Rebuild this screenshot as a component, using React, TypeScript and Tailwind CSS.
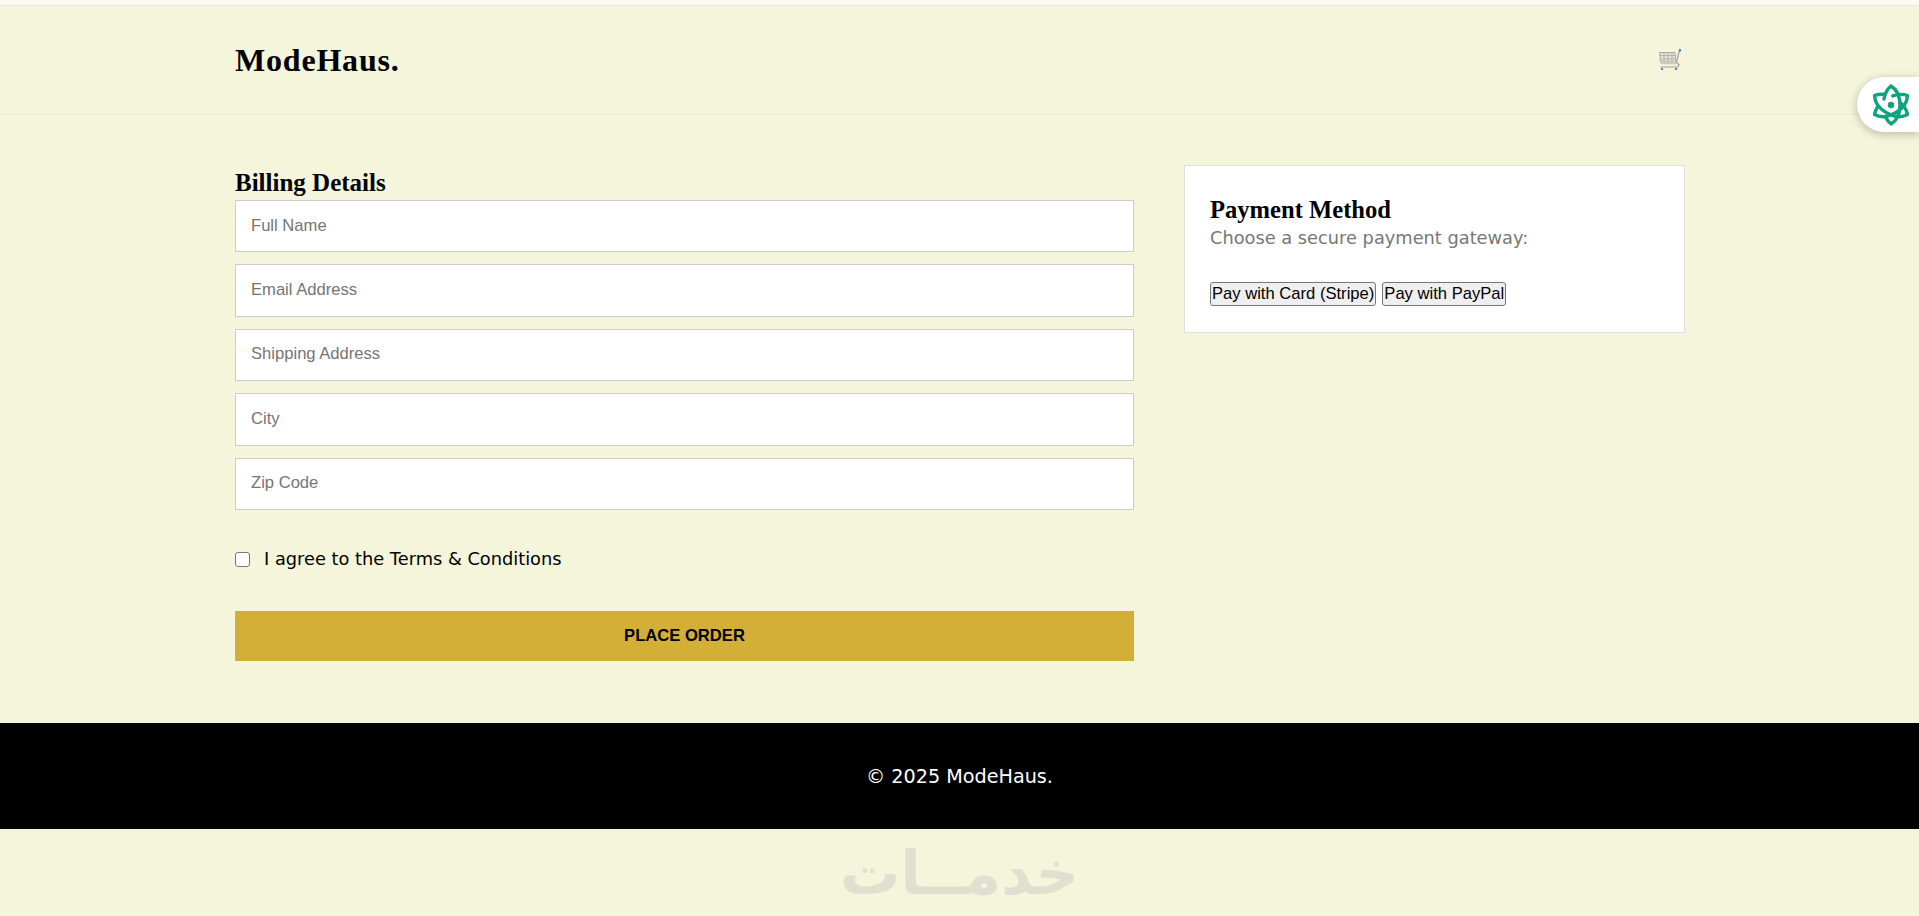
const fields = ["Full Name", "Email Address", "Shipping Address", "City", "Zip Code"];

const playfair = "font-['Liberation_Serif',serif] font-bold";
const montserrat = "font-['DejaVu_Sans',sans-serif]";
const arial = "font-['Liberation_Sans',sans-serif]";

function CartIcon() {
  return (
    <svg width="22" height="21" viewBox="0 0 22 21" fill="none">
      <path d="M0.5 3.5h15.5l1 9.5H1.5z" fill="#e2e2da" stroke="#a9a9a4" strokeWidth="1" />
      <path d="M1 6.5h16M1 10h16M5 3.5v9.5M9 3.5v9.5M13 3.5v9.5" stroke="#b0b0aa" strokeWidth="0.9" />
      <path d="M20.5 1l-3 12.5 2.5 2-1 2.5H1.5" stroke="#a0a09a" strokeWidth="1.2" />
      <path d="M1.5 14.5h17" stroke="#c8c8c0" strokeWidth="1.5" />
      <rect x="20" y="0" width="2" height="2.5" fill="#3f83c9" />
      <rect x="2" y="19" width="2" height="2" fill="#3f83c9" />
      <rect x="16" y="19" width="2" height="2" fill="#3f83c9" />
    </svg>
  );
}

function AssistantIcon() {
  const loop = "M13 15 C14 9 17 4.5 20 2 C32 9 32 33 20 40 C18 38.5 16 36 14.5 33";
  return (
    <svg width="40" height="42" viewBox="0 0 40 42" fill="none" stroke="#10a37f" strokeWidth="3.4" strokeLinecap="round" strokeLinejoin="round">
      <path d={loop} />
      <path d={loop} transform="rotate(60 20 21)" />
      <path d={loop} transform="rotate(120 20 21)" />
      <circle cx="20" cy="21" r="3.2" fill="#10a37f" stroke="none" />
    </svg>
  );
}

export default function App() {
  return (
    <div className="h-[916px] bg-[#f5f5dc] flex flex-col relative overflow-hidden">
      <div className="h-[6px] bg-[#fff8f0] border-b border-[#f0e6d8]" />

      <header className="h-[109px] border-b border-[#e9e9d4] flex items-center">
        <div className="w-[1450px] ml-[235px] flex items-center justify-between">
          <div className={`${playfair} text-[32px] tracking-[0.8px] text-black`}>ModeHaus.</div>
          <div className="mr-1 -mt-px"><CartIcon /></div>
        </div>
      </header>

      <main className="w-[1450px] ml-[235px] flex gap-[50px] pt-[50px] h-[608px]">
        <section className="w-[899px]">
          <h2 className={`${playfair} text-[25px] leading-[35px] text-black`}>Billing Details</h2>
          <div className="flex flex-col gap-3">
            {fields.map((f) => (
              <input
                key={f}
                placeholder={f}
                className={`h-[52.4px] bg-white border border-[#cccccc] px-[15px] pb-px text-[16.6px] ${arial} placeholder:text-[#757575] outline-none`}
              />
            ))}
          </div>
          <label className={`${montserrat} mt-[36px] flex items-center text-[17.8px] text-black`}>
            <input type="checkbox" className="w-[15px] h-[15px] mr-[14px] appearance-none bg-white border border-[#767676] rounded-[3px]" />
            I agree to the Terms &amp; Conditions
          </label>
          <button className={`mt-[38px] w-full h-[50px] pt-px bg-[#d4af37] text-black font-bold text-[16.6px] ${arial}`}>
            PLACE ORDER
          </button>
        </section>

        <aside className="w-[501px] h-[168px] bg-white border border-[#e0e0e0] px-[25px] pt-[26px]">
          <h3 className={`${playfair} text-[24.6px] leading-[35px] text-black`}>Payment Method</h3>
          <p className={`${montserrat} text-[17.8px] leading-[22px] text-[#777777]`}>Choose a secure payment gateway:</p>
          <div className="mt-[33px] flex gap-[6px]">
            <button className={`h-[24px] px-[1px] bg-[#efefef] border border-[#767676] rounded-[3px] text-[16.6px] leading-none ${arial} text-black`}>
              Pay with Card (Stripe)
            </button>
            <button className={`h-[24px] px-[1px] bg-[#efefef] border border-[#767676] rounded-[3px] text-[16.6px] leading-none ${arial} text-black`}>
              Pay with PayPal
            </button>
          </div>
        </aside>
      </main>

      <footer className={`${montserrat} h-[106px] pt-[2px] bg-black text-white text-[19.2px] flex items-center justify-center`}>
        © 2025 ModeHaus.
      </footer>

      <div className="flex-1 flex items-center justify-center font-['DejaVu_Sans',sans-serif] font-bold text-[60px] leading-none text-[#e0e0d0]">
        خدمــات
      </div>

      <div className="absolute right-0 top-[77px] w-[62px] h-[55px] bg-white rounded-l-[28px] shadow-[0_2px_10px_rgba(0,0,0,0.25)] flex items-center pl-[14px]">
        <AssistantIcon />
      </div>
    </div>
  );
}
